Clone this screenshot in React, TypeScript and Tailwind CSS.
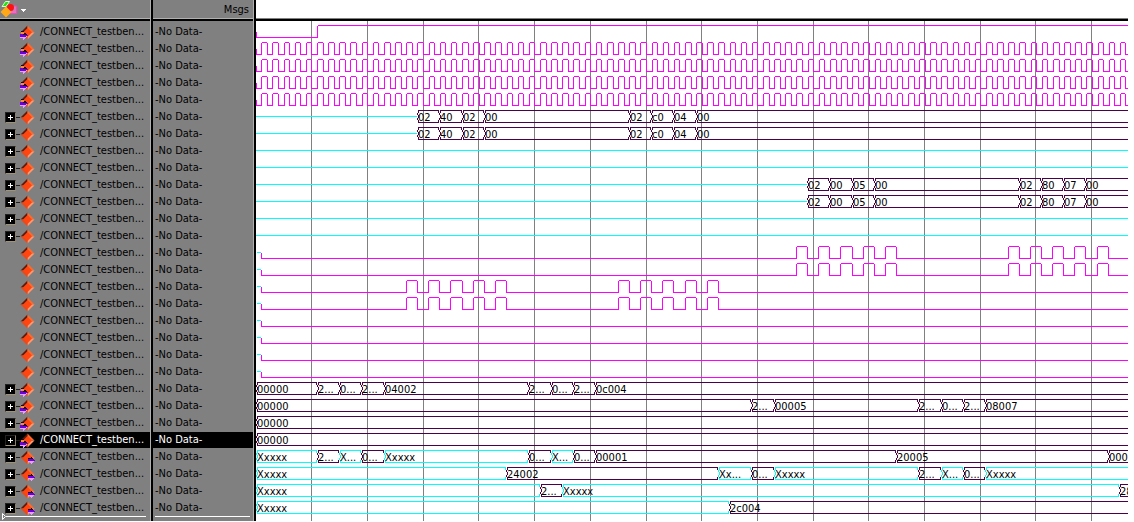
import React from "react";

const PURPLE = "#4b004b";
const CYAN = "#00ffff";
const MAGENTA = "#ff00ff";
const END = 4000;
const LEFT = 256;
const HEADER = 21;
const FIRST_ROW = 24;
const PITCH = 17;

type Marker = "in" | "out" | "none";
type Segment = [start: number, label: string];
type Wave =
  | { kind: "reset" }
  | { kind: "clock" }
  | { kind: "idle" }
  | { kind: "pulse"; edges: number[] }
  | { kind: "bus"; idleUntil?: number; segments: Segment[] };
type Signal = { marker: Marker; expandable: boolean; selected?: boolean; wave: Wave };

const sendBytes: Wave = {
  kind: "bus",
  idleUntil: 417,
  segments: [[417, "02"], [439, "40"], [462, "02"], [484, "00"], [629, "02"], [651, "c0"], [673, "04"], [696, "00"]],
};
const receiveBytes: Wave = {
  kind: "bus",
  idleUntil: 807,
  segments: [[807, "02"], [829, "00"], [852, "05"], [874, "00"], [1019, "02"], [1041, "80"], [1063, "07"], [1085, "00"]],
};
const latePulses: Wave = {
  kind: "pulse",
  edges: [796, 807, 818, 829, 840, 852, 863, 874, 885, 896, 1008, 1019, 1030, 1041, 1052, 1063, 1074, 1085, 1097, 1108],
};
const earlyPulses: Wave = {
  kind: "pulse",
  edges: [406, 417, 428, 439, 450, 462, 473, 484, 495, 506, 618, 629, 640, 651, 662, 673, 685, 696, 707, 718],
};
const flat: Wave = { kind: "pulse", edges: [] };
const zeros: Wave = { kind: "bus", segments: [[256, "00000"]] };
const idle: Wave = { kind: "idle" };

const scalar = (wave: Wave, marker: Marker = "none"): Signal => ({ marker, expandable: false, wave });
const vector = (wave: Wave, marker: Marker = "none", selected = false): Signal => ({ marker, expandable: true, selected, wave });

const signals: Signal[] = [
  scalar({ kind: "reset" }, "in"),
  scalar({ kind: "clock" }, "in"),
  scalar({ kind: "clock" }, "in"),
  scalar({ kind: "clock" }, "in"),
  scalar({ kind: "clock" }, "in"),
  vector(sendBytes),
  vector(sendBytes),
  vector(idle),
  vector(idle),
  vector(receiveBytes),
  vector(receiveBytes),
  vector(idle),
  vector(idle),
  scalar(latePulses),
  scalar(latePulses),
  scalar(earlyPulses),
  scalar(earlyPulses),
  scalar(flat),
  scalar(flat),
  scalar(flat),
  scalar(flat),
  vector({
    kind: "bus",
    segments: [[256, "00000"], [317, "2..."], [339, "0..."], [361, "2..."], [384, "04002"], [528, "2..."], [551, "0..."], [573, "2..."], [595, "0c004"]],
  }, "in"),
  vector({
    kind: "bus",
    segments: [[256, "00000"], [751, "2..."], [774, "00005"], [918, "2..."], [941, "0..."], [963, "2..."], [985, "08007"]],
  }, "in"),
  vector(zeros, "in"),
  vector(zeros, "in", true),
  vector({
    kind: "bus",
    segments: [[256, "Xxxxx"], [317, "2..."], [339, "X..."], [361, "0..."], [384, "Xxxxx"], [528, "0..."], [551, "X..."], [573, "0..."], [595, "00001"], [896, "20005"], [1108, "000"]],
  }, "out"),
  vector({
    kind: "bus",
    segments: [[256, "Xxxxx"], [506, "24002"], [718, "Xx..."], [751, "0..."], [774, "Xxxxx"], [918, "2..."], [941, "X..."], [963, "0..."], [985, "Xxxxx"]],
  }, "out"),
  vector({ kind: "bus", segments: [[256, "Xxxxx"], [540, "2..."], [562, "Xxxxx"], [1119, "28"]] }, "out"),
  vector({ kind: "bus", segments: [[256, "Xxxxx"], [729, "2c004"]] }, "out"),
];

const h = (x1: number, x2: number, y: number) => `M${x1} ${y + 0.5}H${x2}`;
const v = (x: number, y1: number, y2: number) => `M${x + 0.5} ${y1}V${y2}`;

/** Two-level trace: starts low at `from` and toggles at each edge. */
function levels(from: number, edges: number[], y: number) {
  const high = y + 1;
  const low = y + 13;
  let d = "";
  let x = from;
  let up = false;
  for (const edge of [...edges, END]) {
    d += up ? h(x + 1, edge, high) : h(x, edge + 1, low);
    if (edge !== END) d += v(edge, high + 1, low + 1);
    x = edge;
    up = !up;
  }
  return d;
}

const clockEdges = Array.from({ length: 600 }, (_, k) => Math.round(255.7 + 5.575 * (k + 1)));

function Trace({ wave, y }: { wave: Wave; y: number }) {
  if (wave.kind === "idle") return <path d={h(LEFT, END, y + 7)} stroke={CYAN} />;
  if (wave.kind === "reset" || wave.kind === "clock") {
    const edges = wave.kind === "reset" ? [317] : clockEdges;
    return <path d={v(LEFT, y + 8, y + 14) + levels(LEFT, edges, y)} stroke={MAGENTA} />;
  }
  if (wave.kind === "pulse") {
    return (
      <>
        <path d={h(257, 261, y + 7)} stroke={CYAN} />
        <path d={v(261, y + 8, y + 14) + levels(261, wave.edges, y)} stroke={MAGENTA} />
      </>
    );
  }
  return (
    <>
      {wave.idleUntil && <path d={h(LEFT, wave.idleUntil, y + 7)} stroke={CYAN} />}
      {wave.segments.map(([a, label], i) => {
        const last = i === wave.segments.length - 1;
        const b = last ? END : wave.segments[i + 1][0];
        const cap = (x: number) => v(x, y + 1, y + 4) + v(x, y + 11, y + 14);
        const tick = v(a, y + 4, y + 6) + v(a, y + 9, y + 11);
        const d = h(a + 1, b, y + 1) + h(a + 1, b, y + 13) + cap(a + 1) + tick + v(a + 1, y + 6, y + 9) + cap(b - 1);
        return (
          <g key={a}>
            <path d={d} stroke={label.startsWith("X") ? CYAN : PURPLE} />
            <text x={a + 1} y={y + 12} fill="#000" stroke="none">
              {label}
            </text>
          </g>
        );
      })}
    </>
  );
}

function WaveView() {
  const grid = Array.from({ length: 60 }, (_, i) => v(Math.round(311.3 + 55.7 * i), HEADER, 521)).join("");
  return (
    <svg
      className="block h-[500px] w-full font-['DejaVu_Sans_Condensed','Noto_Sans',sans-serif] text-[11px]"
      role="img"
      aria-label="Waveforms"
    >
      <g transform={`translate(${-LEFT} ${-HEADER})`} fill="none" strokeWidth="1" shapeRendering="crispEdges">
        <path d={grid} stroke="#808080" />
        {signals.map((s, i) => (
          <Trace key={i} wave={s.wave} y={FIRST_ROW + PITCH * i} />
        ))}
      </g>
    </svg>
  );
}

function SignalIcon({ marker }: { marker: Marker }) {
  return (
    <svg width="16" height="15" viewBox="0 0 16 15" className="block shrink-0" aria-hidden="true">
      <path d="M.5 7.500 7.500 .5V7.500Z" fill="#5c1a0a" />
      <path d="M7.500 .5 14.500 7.500H7.500Z" fill="#ff6a2a" />
      <path d="M14.500 7.500 7.500 14.500V7.500Z" fill="#ff9a70" />
      <path d="M.5 7.500H7.500V14.500Z" fill="#e84a1c" />
      <path d="M7.500 3 12 7.500 7.500 12 3 7.500Z" fill="#ff4510" />
      {marker === "in" && (
        <g shapeRendering="crispEdges">
          <path d="M1 6H4V7H1ZM4 8H6V9H7V10H3V9H4Z" fill="#200018" />
          <path d="M1 7H4V9H1Z" fill="#ff8a30" />
          <path d="M0 9H3V10H8V11H6V12H0Z" fill="#6a00e0" />
          <path d="M0 12H6V11H7V12H6V13H5V14H4V15H3V13H0Z" fill="#ee9cff" />
        </g>
      )}
      {marker === "out" && (
        <g shapeRendering="crispEdges">
          <path d="M11 7H12V8H13V9H8V8H11Z" fill="#200018" />
          <path d="M8 9H14V10H15V11H8Z" fill="#6a00e0" />
          <path d="M8 11H14V12H13V13H12V14H11V13H10V12H8Z" fill="#ee9cff" />
        </g>
      )}
    </svg>
  );
}

function ObjectsIcon() {
  return (
    <svg width="18" height="18" viewBox="0 0 18 18" className="block" aria-hidden="true">
      <path d="M9 6H16.500V13.500H9Z" fill="#d878b8" stroke="#f048b8" />
      <path d="M2 6.500 5.500 1.500 9.500 1.500 6 6.500Z" fill="#28e018" stroke="#d0ffc8" />
      <circle cx="10.500" cy="7.500" r="3.500" fill="#ff1010" />
      <path d="M6 6.500 11.500 12 6 17.500 .5 12Z" fill="#ffa818" />
    </svg>
  );
}

function SignalRow({ signal }: { signal: Signal }) {
  const tone = signal.selected ? "bg-black text-white" : "text-black";
  return (
    <tr className="h-[17px]" aria-selected={signal.selected ? true : undefined}>
      <td className="border-r-2 border-black p-0 pr-px pb-px align-top shadow-[inset_-1px_0_0_#b0b0b0]">
        <div className={`flex h-4 items-center whitespace-nowrap ${tone}`}>
          <div className="flex w-5 shrink-0 items-center pl-[5px]">
            {signal.expandable && (
              <>
                <button
                  type="button"
                  aria-label="Expand signal"
                  className="flex size-[11px] shrink-0 items-center justify-center border border-t-[#222] border-r-[#8c8068] border-b-[#a09478] border-l-[#222] bg-black p-0"
                >
                  <svg width="5" height="5" viewBox="0 0 5 5" aria-hidden="true">
                    <path d="M0 2.500H5M2.500 0V5" stroke="#fff" shapeRendering="crispEdges" />
                  </svg>
                </button>
                <span className="h-px flex-1 bg-[#202020]" />
              </>
            )}
          </div>
          <SignalIcon marker={signal.marker} />
          <span className="pl-1">/CONNECT_testben...</span>
        </div>
      </td>
      <td className="border-r-2 border-black p-0 pr-px pb-px align-top shadow-[inset_-1px_0_0_#b0b0b0]">
        <div className={`h-4 pl-0.5 leading-4 whitespace-nowrap ${tone}`}>-No Data-</div>
      </td>
    </tr>
  );
}

export default function App() {
  return (
    <main className="flex items-start bg-white">
      <table className="w-64 shrink-0 table-fixed border-separate border-spacing-0 bg-[#808080] font-['DejaVu_Sans_Condensed','Noto_Sans',sans-serif] text-[11px] leading-4 text-black">
        <colgroup>
          <col className="w-[153px]" />
          <col className="w-[103px]" />
        </colgroup>
        <thead>
          <tr>
            <th className="border-r-2 border-black p-0 pr-px font-normal shadow-[inset_-1px_0_0_#b0b0b0]">
              <div className="flex h-[21px] items-start border-b-2 border-black shadow-[inset_0_-1px_0_#b0b0b0]">
                <button type="button" aria-label="Signal display options" className="flex items-center gap-[3px] p-0">
                  <ObjectsIcon />
                  <svg width="5" height="3" viewBox="0 0 5 3" className="mt-0.5" aria-hidden="true">
                    <path d="M0 0H5V1H4V2H3V3H2V2H1V1H0Z" fill="#fff" />
                  </svg>
                </button>
              </div>
            </th>
            <th className="border-r-2 border-black p-0 pr-px text-right font-normal shadow-[inset_-1px_0_0_#b0b0b0]">
              <div className="h-[21px] border-b-2 border-black pt-0.5 pr-1 shadow-[inset_0_-1px_0_#b0b0b0]">Msgs</div>
            </th>
          </tr>
          <tr className="h-[3px]" aria-hidden="true">
            <td className="border-r-2 border-black p-0 shadow-[inset_-1px_0_0_#b0b0b0]" />
            <td className="border-r-2 border-black p-0 shadow-[inset_-1px_0_0_#b0b0b0]" />
          </tr>
        </thead>
        <tbody>
          {signals.map((s, i) => (
            <SignalRow key={i} signal={s} />
          ))}
        </tbody>
        <tfoot>
          <tr className="h-1">
            <td className="relative border-r-2 border-black p-0 shadow-[inset_-1px_0_0_#b0b0b0]">
              <svg className="absolute -top-1 left-0.5 h-[7px] w-[144px]" aria-hidden="true">
                <path d="M.5 .5 3.500 3.500 .5 6.500Z" fill="#808080" stroke="#fff" />
                <path d="M4 3.500H144" stroke="#fff" shapeRendering="crispEdges" />
              </svg>
            </td>
            <td className="relative border-r-2 border-black p-0 shadow-[inset_-1px_0_0_#b0b0b0]">
              <div className="absolute -top-px right-1 left-0.5 h-px bg-white" />
            </td>
          </tr>
        </tfoot>
      </table>
      <section className="mr-1.5 min-w-0 flex-1 overflow-hidden">
        <div className="h-[21px] border-b-2 border-black shadow-[inset_0_-1px_0_#808080]" />
        <WaveView />
      </section>
    </main>
  );
}
